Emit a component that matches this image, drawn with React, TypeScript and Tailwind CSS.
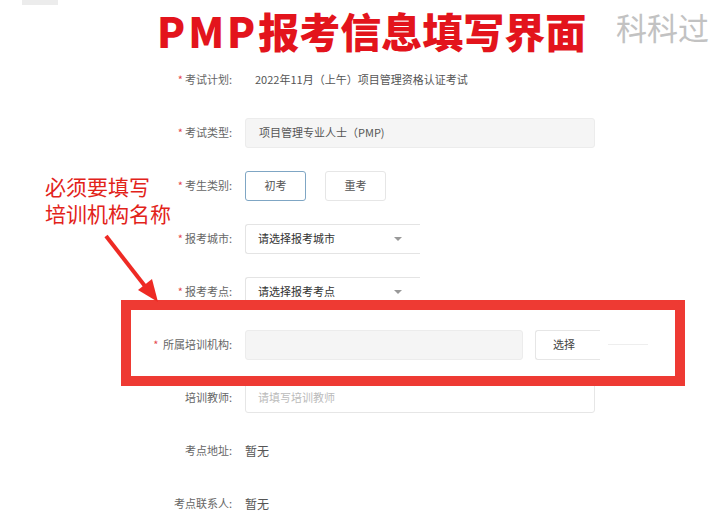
import { ReactNode } from 'react';

const cjk = { fontFamily: '"Noto Sans CJK SC", "Noto Sans", sans-serif' };

function Row({ label, required, children }: { label: string; required?: boolean; children: ReactNode }) {
  return (
    <div className="flex h-[53px] items-center">
      <div className="w-[232px] shrink-0 text-right text-[11px] text-[#666]">
        {required && <span className="mr-[2px] text-[#e5484d]">*</span>}
        {label}:
      </div>
      <div className="ml-[13px] flex flex-1 items-center text-[11px] text-[#555]">{children}</div>
    </div>
  );
}

function Select({ text }: { text: string }) {
  return (
    <div className="flex h-[30px] w-[175px] items-center rounded-l-[3px] border border-r-0 border-[#e4e4e4] pl-[12px] text-[#333]">
      <span className="flex-1">{text}</span>
      <span className="mr-[18px] h-0 w-0 border-x-[4px] border-t-[4px] border-x-transparent border-t-[#999]" />
    </div>
  );
}

export default function App() {
  return (
    <div className="relative h-[521px] w-[720px] overflow-hidden bg-white" style={cjk}>
      <div className="absolute left-[22px] top-0 h-[5px] w-[36px] bg-[#ececec]" />

      <div className="flex h-[53px] items-start">
        <h1 className="ml-[157px] shrink-0 whitespace-nowrap text-[41px] font-black leading-[60px] text-[#e3141c]">
          <span className="tracking-[3px]">PMP</span>报考信息填写界面
        </h1>
        <span className="ml-auto mr-[11px] text-[31px] leading-[54px] text-[#c2c2c2]">科科过</span>
      </div>

      <Row label="考试计划" required>
        <span className="ml-[10px]">2022年11月（上午）项目管理资格认证考试</span>
      </Row>
      <Row label="考试类型" required>
        <div className="flex h-[30px] w-[350px] items-center rounded-[3px] border border-[#ececec] bg-[#f5f5f5] pl-[13px]">
          项目管理专业人士（PMP)
        </div>
      </Row>
      <Row label="考生类别" required>
        <div className="flex h-[30px] w-[61px] items-center justify-center rounded-[3px] border border-[#7fa6c4] text-[#555]">
          初考
        </div>
        <div className="ml-[19px] flex h-[30px] w-[61px] items-center justify-center rounded-[3px] border border-[#e6e6e6] text-[#555]">
          重考
        </div>
      </Row>
      <Row label="报考城市" required>
        <Select text="请选择报考城市" />
      </Row>
      <Row label="报考考点" required>
        <Select text="请选择报考考点" />
      </Row>
      <Row label=" 所属培训机构" required>
        <div className="h-[30px] w-[278px] rounded-[3px] border border-[#ececec] bg-[#f5f5f5]" />
        <div className="ml-[12px] flex h-[30px] w-[65px] items-center rounded-l-[3px] border border-r-0 border-[#e6e6e6] pl-[17px] text-[#444]">
          选择
        </div>
        <span className="ml-[8px] h-px w-[40px] bg-[#eeeeee]" />
      </Row>
      <Row label="培训教师">
        <div className="flex h-[30px] w-[350px] items-center rounded-[3px] border border-[#e6e6e6] pl-[12px] text-[#bbb]">
          请填写培训教师
        </div>
      </Row>
      <Row label="考点地址">
        <span className="text-[12px] text-[#555]">暂无</span>
      </Row>
      <Row label="考点联系人">
        <span className="text-[12px] text-[#555]">暂无</span>
      </Row>

      {/* annotation overlay */}
      <div className="absolute left-[121px] top-[300px] h-[86px] w-[564px] border-[10px] border-[#ee3a33]" />
      <div className="absolute left-[45px] top-[173px] text-[21px] leading-[27px] text-[#e2231a]">
        <div>必须要填写</div>
        <div>培训机构名称</div>
      </div>
      <svg className="absolute left-[100px] top-[232px]" width="64" height="72" viewBox="0 0 64 72">
        <line x1="6" y1="4" x2="48" y2="58" stroke="#ee2a24" strokeWidth="4" />
        <polygon points="58,70 38,58 52,47" fill="#ee2a24" />
      </svg>
    </div>
  );
}
